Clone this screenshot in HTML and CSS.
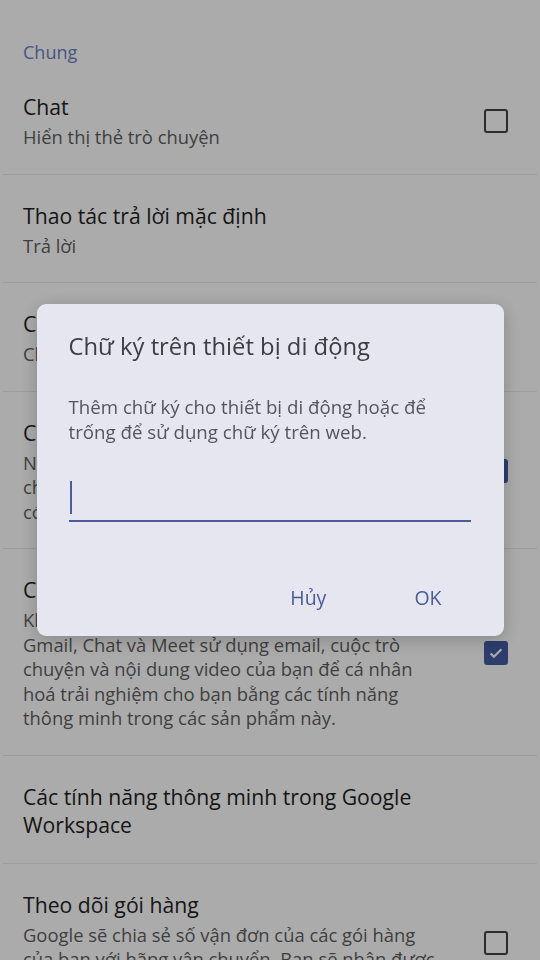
FILE: index.html
```html
<!DOCTYPE html>
<html lang="vi">
<head>
<meta charset="utf-8">
<title>Cài đặt chung</title>
<link rel="stylesheet" href="styles.css">
</head>
<body>
<main class="settings">
  <h2 class="section">Chung</h2>

  <div class="row">
    <div class="text">
      <div class="title">Chat</div>
      <div class="sub">Hiển thị thẻ trò chuyện</div>
    </div>
    <span class="check"></span>
  </div>

  <div class="row">
    <div class="text">
      <div class="title">Thao tác trả lời mặc định</div>
      <div class="sub">Trả lời</div>
    </div>
  </div>

  <div class="row">
    <div class="text">
      <div class="title">Chữ ký trên thiết bị di động</div>
      <div class="sub">Chưa đặt</div>
    </div>
  </div>

  <div class="row">
    <div class="text">
      <div class="title">Chế độ xem cuộc hội thoại</div>
      <div class="sub">Nhóm các email có cùng chủ đề<br>cho các thông báo IMAP, POP<br>có liên quan</div>
    </div>
    <span class="check on"><svg viewBox="0 0 24 24"><path d="M5.5 12.5l4 4 9-9"/></svg></span>
  </div>

  <div class="row">
    <div class="text">
      <div class="title">Các tính năng thông minh và cá nhân hoá</div>
      <div class="sub">Khi bạn bật chế độ cài đặt này, bạn đồng ý<br>Gmail, Chat và Meet sử dụng email, cuộc trò chuyện và nội dung video của bạn để cá nhân hoá trải nghiệm cho bạn bằng các tính năng thông minh trong các sản phẩm này.</div>
    </div>
    <span class="check on"><svg viewBox="0 0 24 24"><path d="M5.5 12.5l4 4 9-9"/></svg></span>
  </div>

  <div class="row">
    <div class="text">
      <div class="title">Các tính năng thông minh trong Google Workspace</div>
    </div>
  </div>

  <div class="row">
    <div class="text">
      <div class="title">Theo dõi gói hàng</div>
      <div class="sub">Google sẽ chia sẻ số vận đơn của các gói hàng của bạn với hãng vận chuyển. Bạn sẽ nhận được thông tin cập nhật.</div>
    </div>
    <span class="check"></span>
  </div>
</main>

<div class="scrim">
  <div class="dialog" role="dialog">
    <h1 class="d-title">Chữ ký trên thiết bị di động</h1>
    <p class="d-body">Thêm chữ ký cho thiết bị di động hoặc để trống để sử dụng chữ ký trên web.</p>
    <div class="field"><span class="caret"></span></div>
    <div class="actions">
      <button class="btn">Hủy</button>
      <button class="btn">OK</button>
    </div>
  </div>
</div>
</body>
</html>
```

FILE: styles.css
```css
html, body {
  margin: 0;
  padding: 0;
  background: #ffffff;
}
body {
  font-family: "Open Sans", "Noto Sans", "DejaVu Sans", sans-serif;
  width: 540px;
  height: 960px;
  overflow: hidden;
}
.settings {
  display: flex;
  flex-direction: column;
}
.section {
  margin: 0;
  padding: 40px 0 2px 23px;
  font-size: 18px;
  line-height: 24px;
  font-weight: 400;
  color: #6b80c2;
}
.row {
  display: flex;
  align-items: center;
  padding: 27px 29px 24px 20px;
  margin: 0 3px;
  border-bottom: 1px solid #ebebeb;
}
.text {
  width: 415px;
  flex: none;
}
.title {
  font-size: 21.2px;
  line-height: 28px;
  color: #1f1f1f;
}
.sub {
  margin-top: 4px;
  font-size: 18.4px;
  line-height: 24.5px;
  color: #5f5f5f;
}
.check {
  margin-left: auto;
  width: 24px;
  height: 24px;
  box-sizing: border-box;
  border: 2.5px solid #424242;
  border-radius: 3px;
  flex: none;
  display: flex;
}
.check.on {
  background: #435ca2;
  border-color: #435ca2;
}
.check svg {
  width: 100%;
  height: 100%;
  fill: none;
  stroke: #ffffff;
  stroke-width: 2.6;
}
.scrim {
  position: fixed;
  inset: 0;
  background: rgba(0, 0, 0, 0.33);
  display: flex;
  justify-content: center;
  align-items: flex-start;
  padding-top: 304px;
  box-sizing: border-box;
}
.dialog {
  width: 467px;
  box-sizing: border-box;
  background: #e5e6ef;
  border-radius: 9px;
  padding: 27px 33px 18px 32px;
  box-shadow: 0 4px 18px rgba(0, 0, 0, 0.22);
  display: flex;
  flex-direction: column;
}
.d-title {
  margin: 0;
  font-size: 23.8px;
  line-height: 30px;
  font-weight: 400;
  color: #3d3d42;
}
.d-body {
  margin: 33px 0 0;
  font-size: 18.7px;
  line-height: 25px;
  color: #55565c;
}
.field {
  margin-top: 34px;
  padding: 3px 0 6px;
  border-bottom: 2px solid #4b5b9b;
  display: flex;
}
.caret {
  width: 2px;
  height: 33px;
  background: #4b5b9b;
  margin-left: 1px;
}
.actions {
  margin-top: 56px;
  display: flex;
  justify-content: flex-end;
  gap: 64px;
  padding-right: 17px;
}
.btn {
  font-family: "Open Sans", "Noto Sans", sans-serif;
  font-size: 19.5px;
  line-height: 40px;
  font-weight: 500;
  color: #4b5b96;
  background: none;
  border: 0;
  padding: 0 12px;
}
```
